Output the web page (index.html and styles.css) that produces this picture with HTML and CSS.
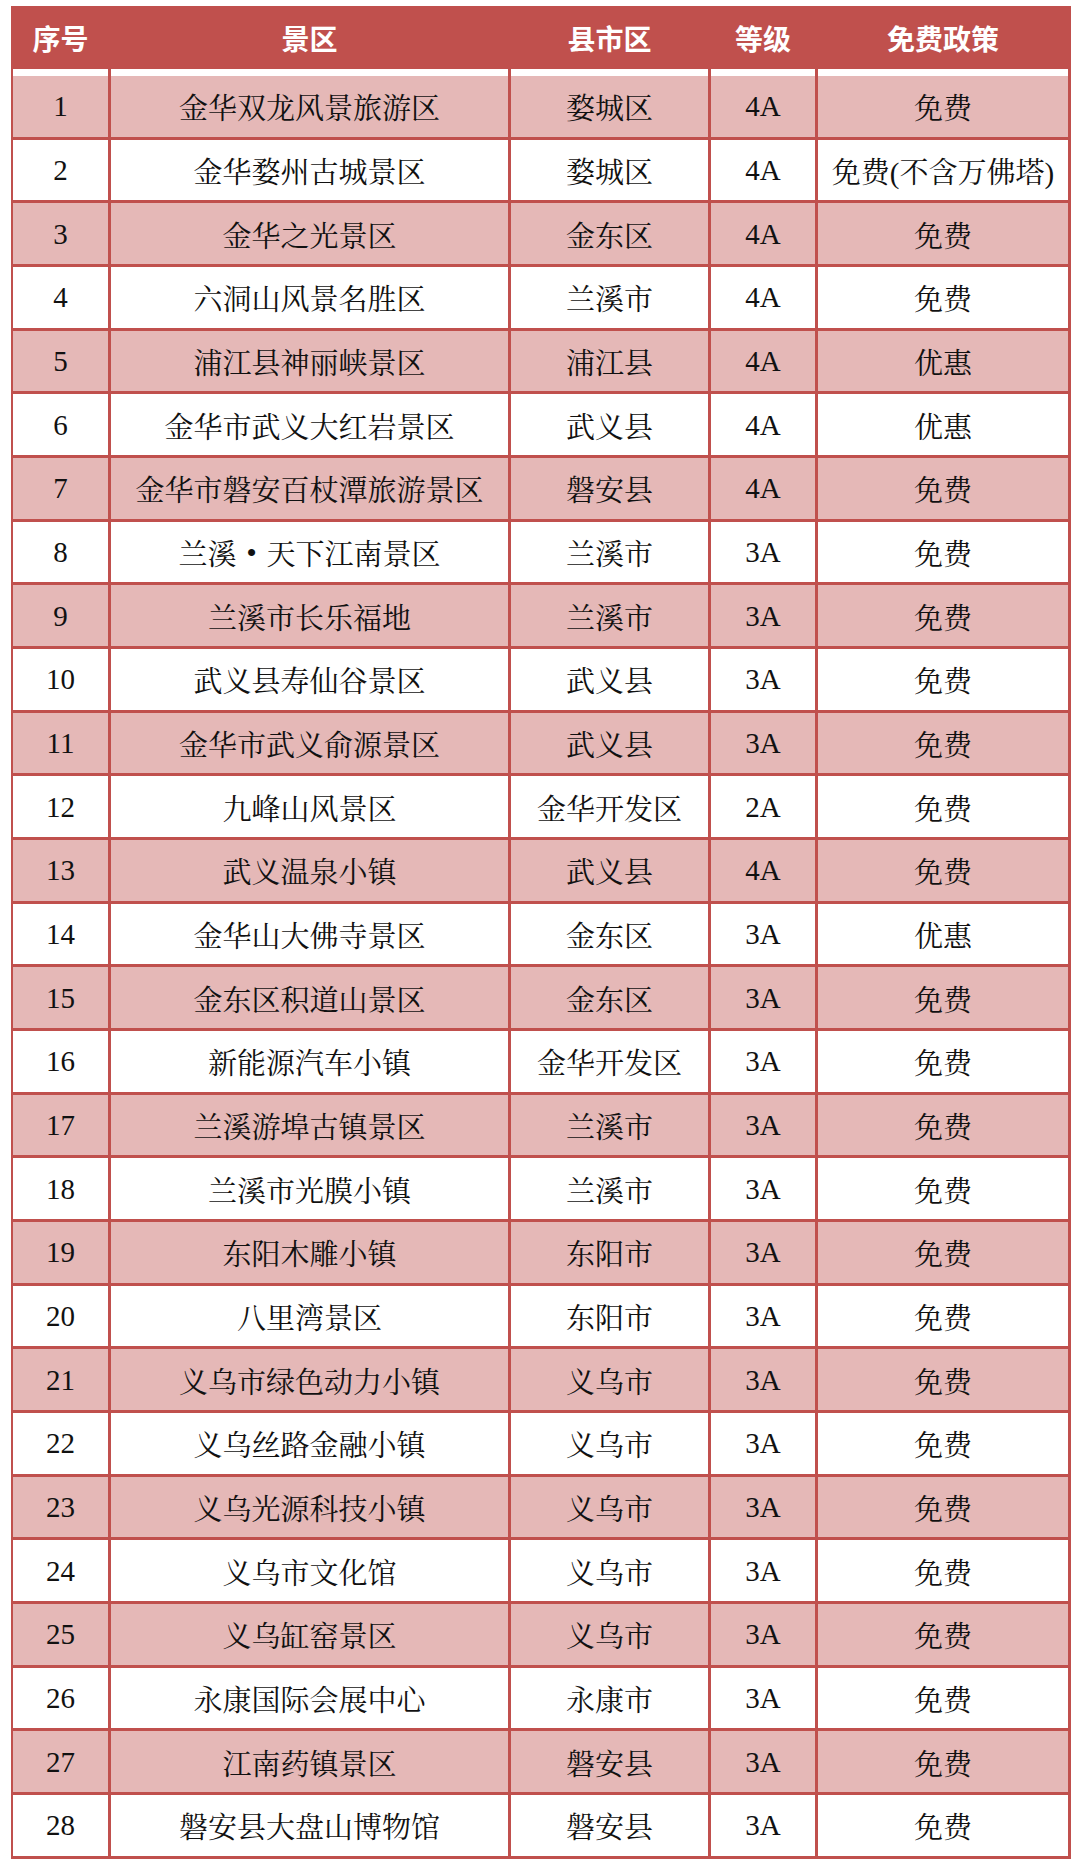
FILE: index.html
```html
<!DOCTYPE html>
<html lang="zh-CN">
<head>
<meta charset="utf-8">
<title>金华景区免费政策</title>
<link rel="stylesheet" href="styles.css">
</head>
<body>
<div class="page">
  <div class="sheet">
    <div class="row head">
      <div class="cell">序号</div><div class="cell">景区</div><div class="cell">县市区</div><div class="cell">等级</div><div class="cell">免费政策</div>
    </div>
    <div class="row spacer">
      <div class="cell"></div><div class="cell"></div><div class="cell"></div><div class="cell"></div><div class="cell"></div>
    </div>
    <div class="row odd"><div class="cell">1</div><div class="cell">金华双龙风景旅游区</div><div class="cell">婺城区</div><div class="cell">4A</div><div class="cell">免费</div></div>
    <div class="row"><div class="cell">2</div><div class="cell">金华婺州古城景区</div><div class="cell">婺城区</div><div class="cell">4A</div><div class="cell">免费(不含万佛塔)</div></div>
    <div class="row odd"><div class="cell">3</div><div class="cell">金华之光景区</div><div class="cell">金东区</div><div class="cell">4A</div><div class="cell">免费</div></div>
    <div class="row"><div class="cell">4</div><div class="cell">六洞山风景名胜区</div><div class="cell">兰溪市</div><div class="cell">4A</div><div class="cell">免费</div></div>
    <div class="row odd"><div class="cell">5</div><div class="cell">浦江县神丽峡景区</div><div class="cell">浦江县</div><div class="cell">4A</div><div class="cell">优惠</div></div>
    <div class="row"><div class="cell">6</div><div class="cell">金华市武义大红岩景区</div><div class="cell">武义县</div><div class="cell">4A</div><div class="cell">优惠</div></div>
    <div class="row odd"><div class="cell">7</div><div class="cell">金华市磐安百杖潭旅游景区</div><div class="cell">磐安县</div><div class="cell">4A</div><div class="cell">免费</div></div>
    <div class="row"><div class="cell">8</div><div class="cell">兰溪<span class="dot">•</span>天下江南景区</div><div class="cell">兰溪市</div><div class="cell">3A</div><div class="cell">免费</div></div>
    <div class="row odd"><div class="cell">9</div><div class="cell">兰溪市长乐福地</div><div class="cell">兰溪市</div><div class="cell">3A</div><div class="cell">免费</div></div>
    <div class="row"><div class="cell">10</div><div class="cell">武义县寿仙谷景区</div><div class="cell">武义县</div><div class="cell">3A</div><div class="cell">免费</div></div>
    <div class="row odd"><div class="cell">11</div><div class="cell">金华市武义俞源景区</div><div class="cell">武义县</div><div class="cell">3A</div><div class="cell">免费</div></div>
    <div class="row"><div class="cell">12</div><div class="cell">九峰山风景区</div><div class="cell">金华开发区</div><div class="cell">2A</div><div class="cell">免费</div></div>
    <div class="row odd"><div class="cell">13</div><div class="cell">武义温泉小镇</div><div class="cell">武义县</div><div class="cell">4A</div><div class="cell">免费</div></div>
    <div class="row"><div class="cell">14</div><div class="cell">金华山大佛寺景区</div><div class="cell">金东区</div><div class="cell">3A</div><div class="cell">优惠</div></div>
    <div class="row odd"><div class="cell">15</div><div class="cell">金东区积道山景区</div><div class="cell">金东区</div><div class="cell">3A</div><div class="cell">免费</div></div>
    <div class="row"><div class="cell">16</div><div class="cell">新能源汽车小镇</div><div class="cell">金华开发区</div><div class="cell">3A</div><div class="cell">免费</div></div>
    <div class="row odd"><div class="cell">17</div><div class="cell">兰溪游埠古镇景区</div><div class="cell">兰溪市</div><div class="cell">3A</div><div class="cell">免费</div></div>
    <div class="row"><div class="cell">18</div><div class="cell">兰溪市光膜小镇</div><div class="cell">兰溪市</div><div class="cell">3A</div><div class="cell">免费</div></div>
    <div class="row odd"><div class="cell">19</div><div class="cell">东阳木雕小镇</div><div class="cell">东阳市</div><div class="cell">3A</div><div class="cell">免费</div></div>
    <div class="row"><div class="cell">20</div><div class="cell">八里湾景区</div><div class="cell">东阳市</div><div class="cell">3A</div><div class="cell">免费</div></div>
    <div class="row odd"><div class="cell">21</div><div class="cell">义乌市绿色动力小镇</div><div class="cell">义乌市</div><div class="cell">3A</div><div class="cell">免费</div></div>
    <div class="row"><div class="cell">22</div><div class="cell">义乌丝路金融小镇</div><div class="cell">义乌市</div><div class="cell">3A</div><div class="cell">免费</div></div>
    <div class="row odd"><div class="cell">23</div><div class="cell">义乌光源科技小镇</div><div class="cell">义乌市</div><div class="cell">3A</div><div class="cell">免费</div></div>
    <div class="row"><div class="cell">24</div><div class="cell">义乌市文化馆</div><div class="cell">义乌市</div><div class="cell">3A</div><div class="cell">免费</div></div>
    <div class="row odd"><div class="cell">25</div><div class="cell">义乌缸窑景区</div><div class="cell">义乌市</div><div class="cell">3A</div><div class="cell">免费</div></div>
    <div class="row"><div class="cell">26</div><div class="cell">永康国际会展中心</div><div class="cell">永康市</div><div class="cell">3A</div><div class="cell">免费</div></div>
    <div class="row odd"><div class="cell">27</div><div class="cell">江南药镇景区</div><div class="cell">磐安县</div><div class="cell">3A</div><div class="cell">免费</div></div>
    <div class="row"><div class="cell">28</div><div class="cell">磐安县大盘山博物馆</div><div class="cell">磐安县</div><div class="cell">3A</div><div class="cell">免费</div></div>
  </div>
</div>
</body>
</html>
```

FILE: styles.css
```css
html, body {
  margin: 0;
  padding: 0;
  background: #ffffff;
}

.page {
  padding: 6px 9px 8px 11px;
}

.sheet {
  display: grid;
  grid-template-columns: 95px 397px 197px 104px 250px;
  column-gap: 3px;
  width: 1055px;
  background: #c0504d;
  border-left: 2px solid #c0504d;
  border-right: 3px solid #c0504d;
}

.row {
  display: contents;
}

.cell {
  box-sizing: border-box;
  display: flex;
  align-items: center;
  justify-content: center;
  white-space: nowrap;
  background: #ffffff;
  color: #111111;
  font-family: "Liberation Serif", "Noto Serif CJK SC", "Noto Sans CJK SC", serif;
  font-size: 29px;
  height: 63.68px;
  border-bottom: 3px solid #c0504d;
  padding-top: 1px;
}

.row.odd .cell {
  background: #e5b8b7;
}

.head .cell {
  height: 63px;
  background: #c0504d;
  color: #ffffff;
  border-bottom: 0;
  padding-top: 0;
  font-family: "Noto Sans CJK SC", "Liberation Sans", sans-serif;
  font-weight: 700;
  font-size: 28px;
}

.spacer .cell {
  height: 7px;
  border-bottom: 0;
  padding: 0;
}

.dot {
  display: inline-block;
  width: 30px;
  text-align: center;
  font-family: "Liberation Sans", sans-serif;
  font-size: 26px;
}
```
